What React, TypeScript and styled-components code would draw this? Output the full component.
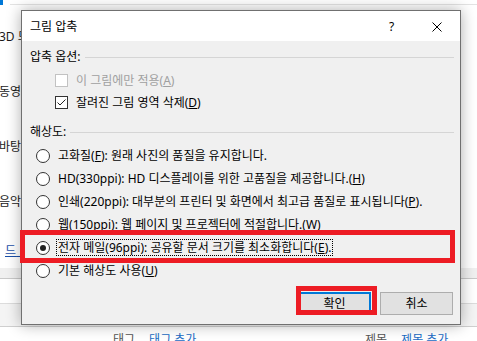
import React from "react";
import styled, { createGlobalStyle } from "styled-components";

const GlobalStyle = createGlobalStyle`
  body {
    margin: 0;
    font-family: "Noto Sans", "Noto Sans CJK KR", sans-serif;
    font-size: 12px;
    color: #000;
  }
`;

interface Choice {
  label: string;
  key: string;
  tail?: string;
  selected?: boolean;
}

const choices: Choice[] = [
  { label: "고화질(", key: "F", tail: "): 원래 사진의 품질을 유지합니다." },
  { label: "HD(330ppi): HD 디스플레이를 위한 고품질을 제공합니다.(", key: "H", tail: ")" },
  { label: "인쇄(220ppi): 대부분의 프린터 및 화면에서 최고급 품질로 표시됩니다(", key: "P", tail: ")." },
  { label: "웹(150ppi): 웹 페이지 및 프로젝터에 적절합니다.(", key: "W", tail: ")" },
  { label: "전자 메일(96ppi): 공유할 문서 크기를 최소화합니다(", key: "E", tail: ").", selected: true },
  { label: "기본 해상도 사용(", key: "U", tail: ")" }
];

const App: React.FC = () => {
  return (
    <Page>
      <GlobalStyle />
      <TopStrip>
        <AccentMark />
        <TopRule />
      </TopStrip>

      <Sidebar>
        <SideLabel>3D 모델</SideLabel>
        <SideLabel>동영상</SideLabel>
        <SideLabel>바탕 화면</SideLabel>
        <SideLabel>음악 파일</SideLabel>
        <SideLink>드{"\u00a0\u00a0\u00a0\u00a0"}</SideLink>
      </Sidebar>

      <Band $height={10} $bg="#f0f0f0" $line="#c9c9c9" />
      <Band $height={24} $bg="#ffffff" $line="#dcdcdc" />
      <Band $height={22} $bg="#f4f4f4" $line="#cfcfcf" />

      <FooterGroup $left={113}>
        <FooterText>태그</FooterText>
        <FooterAction>태그 추가</FooterAction>
      </FooterGroup>
      <FooterGroup $left={365}>
        <FooterText>제목</FooterText>
        <FooterAction>제목 추가</FooterAction>
      </FooterGroup>

      <Dialog>
        <TitleBar>
          <TitleText>그림 압축</TitleText>
          <CaptionButton $width={45}>?</CaptionButton>
          <CaptionButton $width={46}>
            <svg width="10" height="10" viewBox="0 0 10 10">
              <path d="M0.5 0.5 L9.5 9.5 M9.5 0.5 L0.5 9.5" stroke="#000" strokeWidth="1" />
            </svg>
          </CaptionButton>
        </TitleBar>

        <Body>
          <GroupHeader>
            <span>압축 옵션:</span>
            <Separator />
          </GroupHeader>

          <CheckList>
            <CheckRow $disabled>
              <CheckBox $disabled />
              <span>
                이 그림에만 적용(<u>A</u>)
              </span>
            </CheckRow>
            <CheckRow>
              <CheckBox>
                <svg width="11" height="11" viewBox="0 0 11 11">
                  <polyline points="1.5,5.5 4,8 9.5,2.5" fill="none" stroke="#222" strokeWidth="1" />
                </svg>
              </CheckBox>
              <span>
                잘려진 그림 영역 삭제(<u>D</u>)
              </span>
            </CheckRow>
          </CheckList>

          <GroupHeader $spaced>
            <span>해상도:</span>
            <Separator />
          </GroupHeader>

          <RadioList>
            {choices.map(c => (
              <RadioRow key={c.key}>
                <Radio $checked={c.selected} />
                <RadioLabel $focused={c.selected}>
                  {c.label}
                  <u>{c.key}</u>
                  {c.tail}
                </RadioLabel>
              </RadioRow>
            ))}
          </RadioList>

          <ButtonRow>
            <PushButton $default>확인</PushButton>
            <PushButton>취소</PushButton>
          </ButtonRow>
        </Body>

        <Annotation $left={-2} $top={219} $width={435} $height={33} />
        <Annotation $left={274} $top={275} $width={81} $height={29} />
      </Dialog>
    </Page>
  );
};

const Page = styled.div`
  position: relative;
  width: 477px;
  height: 341px;
  overflow: hidden;
  background: #fff;
  display: flex;
  flex-direction: column;
`;

const TopStrip = styled.div`
  display: flex;
  height: 5px;
`;

const AccentMark = styled.div`
  width: 3px;
  height: 5px;
  background: #0078d7;
`;

const TopRule = styled.div`
  flex: 1;
  margin-left: 7px;
  height: 4px;
  border-bottom: 1px solid #e3e3e3;
`;

const Sidebar = styled.div`
  height: 263px;
  display: flex;
  flex-direction: column;
  padding-top: 24px;
  box-sizing: border-box;
`;

const SideLabel = styled.div`
  height: 55px;
  line-height: 16px;
  color: #1a1a1a;
  white-space: nowrap;
  margin-left: -1px;
`;

const SideLink = styled.div`
  margin-top: -6px;
  padding-left: 5px;
  line-height: 16px;
  color: #1b4fa8;
  text-decoration: underline;
  white-space: nowrap;
`;

const Band = styled.div<{ $height: number; $bg: string; $line: string }>`
  height: ${p => p.$height}px;
  background: ${p => p.$bg};
  border-bottom: 1px solid ${p => p.$line};
  flex-shrink: 0;
`;

const FooterGroup = styled.div<{ $left: number }>`
  position: absolute;
  left: ${p => p.$left}px;
  top: 332px;
  display: flex;
  gap: 14px;
  line-height: 16px;
`;

const FooterText = styled.span`
  color: #555;
`;

const FooterAction = styled.span`
  color: #1a6cc4;
`;

const Dialog = styled.div`
  position: absolute;
  left: 21px;
  top: 10px;
  width: 440px;
  height: 315px;
  box-sizing: border-box;
  border: 1px solid #707070;
  background: #f0f0f0;
  box-shadow: 0 0 14px rgba(0, 0, 0, 0.32);
  display: flex;
  flex-direction: column;
`;

const TitleBar = styled.div`
  height: 30px;
  box-sizing: border-box;
  padding: 2px 0 0 8px;
  background: #fff;
  display: flex;
  align-items: center;
`;

const TitleText = styled.div`
  flex: 1;
  line-height: 16px;
`;

const CaptionButton = styled.div<{ $width: number }>`
  flex: 0 0 ${p => p.$width}px;
  height: 28px;
  display: flex;
  align-items: center;
  justify-content: center;
  line-height: 16px;
`;

const Body = styled.div`
  flex: 1;
  display: flex;
  flex-direction: column;
  padding: 8px 6px 9px 8px;
`;

const GroupHeader = styled.div<{ $spaced?: boolean }>`
  display: flex;
  align-items: center;
  height: 16px;
  line-height: 16px;
  margin-top: ${p => (p.$spaced ? 11 : 0)}px;
`;

const Separator = styled.div`
  flex: 1;
  margin-left: 4px;
  border-top: 1px solid #d5d5d5;
`;

const CheckList = styled.div`
  margin-top: 4px;
  display: flex;
  flex-direction: column;
  padding-left: 25px;
`;

const CheckRow = styled.div<{ $disabled?: boolean }>`
  display: flex;
  align-items: center;
  height: 22px;
  gap: 8px;
  color: ${p => (p.$disabled ? "#a0a0a0" : "#000")};
  white-space: nowrap;
`;

const CheckBox = styled.div<{ $disabled?: boolean }>`
  width: 13px;
  height: 13px;
  box-sizing: border-box;
  background: #fff;
  border: 1px solid ${p => (p.$disabled ? "#c2c2c2" : "#333")};
  display: flex;
  align-items: center;
  justify-content: center;
`;

const RadioList = styled.div`
  margin-top: 4px;
  display: flex;
  flex-direction: column;
  padding-left: 6px;
`;

const RadioRow = styled.div`
  display: flex;
  align-items: center;
  height: 23px;
  gap: 6px;
  white-space: nowrap;
`;

const Radio = styled.div<{ $checked?: boolean }>`
  width: 14px;
  height: 14px;
  box-sizing: border-box;
  border-radius: 50%;
  border: 1px solid #333;
  background: #fff;
  display: flex;
  align-items: center;
  justify-content: center;

  &::after {
    content: "";
    display: ${p => (p.$checked ? "block" : "none")};
    width: 6px;
    height: 6px;
    border-radius: 50%;
    background: #222;
  }
`;

const RadioLabel = styled.span<{ $focused?: boolean }>`
  line-height: 15px;
  padding: 0 1px;
  border: 1px dotted ${p => (p.$focused ? "#000" : "transparent")};
`;

const ButtonRow = styled.div`
  margin-top: 10px;
  display: flex;
  justify-content: flex-end;
  gap: 9px;
  padding-right: 1px;
`;

const PushButton = styled.div<{ $default?: boolean }>`
  width: 73px;
  height: 23px;
  box-sizing: border-box;
  background: #e1e1e1;
  border: ${p => (p.$default ? "2px solid #0078d7" : "1px solid #adadad")};
  display: flex;
  align-items: center;
  justify-content: center;
  line-height: 16px;
`;

const Annotation = styled.div<{ $left: number; $top: number; $width: number; $height: number }>`
  position: absolute;
  left: ${p => p.$left}px;
  top: ${p => p.$top}px;
  width: ${p => p.$width}px;
  height: ${p => p.$height}px;
  box-sizing: border-box;
  border: 5px solid #ed1c24;
  pointer-events: none;
`;

export default App;
